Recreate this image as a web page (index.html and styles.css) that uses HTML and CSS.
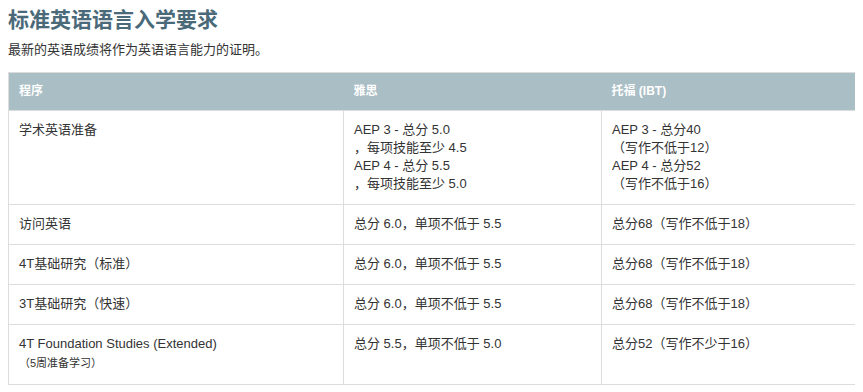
FILE: index.html
```html
<!DOCTYPE html>
<html lang="zh">
<head>
<meta charset="utf-8">
<title>标准英语语言入学要求</title>
<link rel="stylesheet" href="styles.css">
</head>
<body>
<h1 class="title">标准英语语言入学要求</h1>
<p class="lead">最新的英语成绩将作为英语语言能力的证明。</p>
<table class="req">
  <colgroup>
    <col class="c1"><col class="c2"><col class="c3">
  </colgroup>
  <thead>
    <tr><th>程序</th><th>雅思</th><th>托福 (IBT)</th></tr>
  </thead>
  <tbody>
    <tr>
      <td>学术英语准备</td>
      <td>AEP 3 - 总分 5.0<br>，每项技能至少 4.5<br>AEP 4 - 总分 5.5<br>，每项技能至少 5.0</td>
      <td>AEP 3 - 总分40<br>（写作不低于12）<br>AEP 4 - 总分52<br>（写作不低于16）</td>
    </tr>
    <tr><td>访问英语</td><td>总分 6.0，单项不低于 5.5</td><td>总分68（写作不低于18）</td></tr>
    <tr><td>4T基础研究（标准）</td><td>总分 6.0，单项不低于 5.5</td><td>总分68（写作不低于18）</td></tr>
    <tr><td>3T基础研究（快速）</td><td>总分 6.0，单项不低于 5.5</td><td>总分68（写作不低于18）</td></tr>
    <tr>
      <td>4T Foundation Studies (Extended)<span class="note">（5周准备学习）</span></td>
      <td>总分 5.5，单项不低于 5.0</td>
      <td>总分52（写作不少于16）</td>
    </tr>
  </tbody>
</table>
</body>
</html>
```

FILE: styles.css
```css
body {
  margin: 8px;
  background: #fff;
  font-family: "Liberation Sans", Arial, "Noto Sans CJK SC", sans-serif;
  color: #333;
}
.title {
  margin: 0;
  font-size: 21px;
  line-height: 24px;
  font-weight: bold;
  color: #4a6a79;
}
.lead {
  margin: 9px 0 0;
  font-size: 13px;
  line-height: 18px;
  color: #333;
}
.req {
  margin-top: 13px;
  width: 849px;
  border-collapse: collapse;
  border: 1px solid #ddd;
  font-size: 13px;
  line-height: 18px;
  table-layout: fixed;
}
.c1 { width: 335px; }
.c2 { width: 258px; }
.c3 { width: 256px; }
.req th {
  background: #aabec5;
  color: #fff;
  font-size: 12px;
  font-weight: bold;
  text-align: left;
  padding: 10px 10px;
  line-height: 17px;
  height: 17px;
}
.req td {
  border: 1px solid #ddd;
  padding: 10px 10px 11px;
  vertical-align: top;
  color: #333;
}
.note {
  display: block;
  font-size: 11px;
  line-height: 20px;
}
```
